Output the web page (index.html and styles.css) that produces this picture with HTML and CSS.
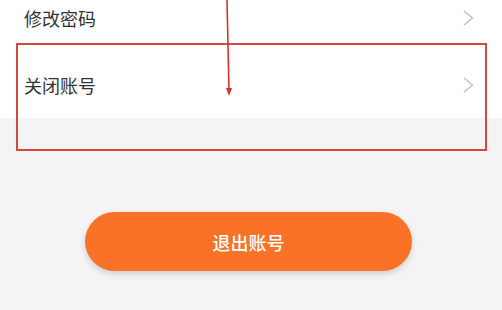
FILE: index.html
```html
<!DOCTYPE html>
<html lang="zh-CN">
<head>
    <meta charset="UTF-8">
    <meta name="viewport" content="width=device-width, initial-scale=1.0">
    <title>账号设置</title>
    <link rel="stylesheet" href="styles.css">
</head>
<body>
    <!-- Settings list -->
    <ul class="menu">
        <li class="menu-item">
            <span>修改密码</span>
            <svg class="chevron" viewBox="0 0 11 16"><path d="M1 1 L9.5 8 L1 15"/></svg>
        </li>
        <li class="menu-item">
            <span>关闭账号</span>
            <svg class="chevron" viewBox="0 0 11 16"><path d="M1 1 L9.5 8 L1 15"/></svg>
        </li>
    </ul>

    <button class="logout">退出账号</button>

    <!-- Annotation overlay -->
    <div class="mark-box"></div>
    <svg class="mark-arrow" width="240" height="100" viewBox="0 0 240 100">
        <path d="M227 0 L229 92" stroke="#d4342c" stroke-width="1.6" fill="none"/>
        <path d="M226 88 L229 96 L232 88 Z" fill="#d4342c"/>
    </svg>
</body>
</html>
```

FILE: styles.css
```css
body {
    margin: 0;
    background-color: #f4f4f4;
    font-family: "Noto Sans CJK SC", "Noto Sans", sans-serif;
    position: relative;
    height: 310px;
    overflow: hidden;
}

.menu {
    list-style-type: none;
    margin: -16px 0 0 0;
    padding: 0;
    background-color: #fff;
}

.menu-item {
    height: 67px;
    display: flex;
    align-items: center;
    justify-content: space-between;
    padding: 0 28px 0 24px;
    font-size: 18px;
    color: #333;
}

.chevron {
    width: 11px;
    height: 16px;
    fill: none;
    stroke: #c2c2c2;
    stroke-width: 1.5;
}

/* Logout button */
.logout {
    display: block;
    width: 327px;
    height: 59px;
    margin: 94px 0 0 85px;
    border: none;
    border-radius: 30px;
    background-color: #f97227;
    color: #fff;
    font-family: inherit;
    font-size: 18px;
    font-weight: 500;
    box-shadow: 0 3px 6px rgba(0, 0, 0, 0.15);
}

/* Red annotation */
.mark-box {
    position: absolute;
    left: 16px;
    top: 43px;
    width: 467px;
    height: 104px;
    border: 2px solid #d6473f;
}

.mark-arrow {
    position: absolute;
    left: 0;
    top: 0;
}
```
